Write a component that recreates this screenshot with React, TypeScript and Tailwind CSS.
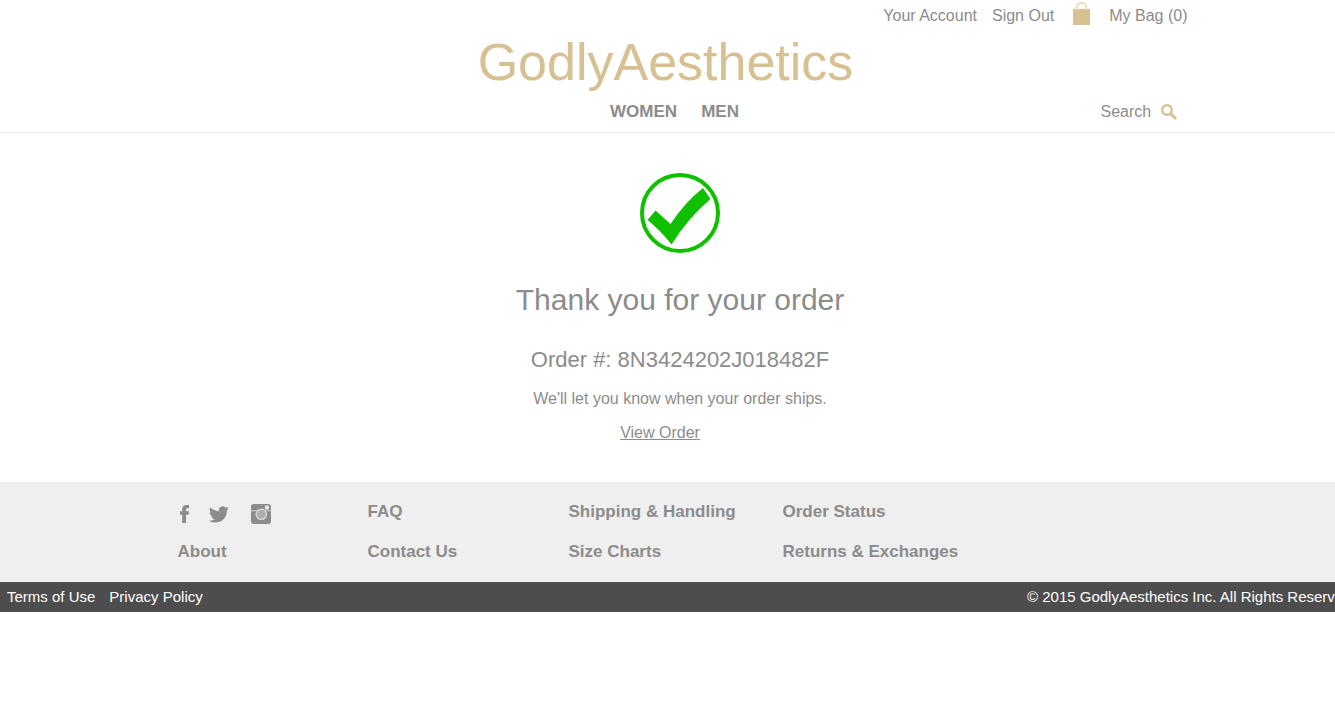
import type { ReactNode } from "react";

function BagIcon() {
  return (
    <svg width="18" height="28" viewBox="0 0 18 28" aria-hidden="true">
      <rect y="7" width="17" height="16" fill="#d7c192" />
      <path d="M3.5 8.5V6a5 5.3 0 0 1 10 0v2.5" fill="none" stroke="#e4d6b4" strokeWidth="1.5" />
    </svg>
  );
}

function SearchIcon() {
  return (
    <svg width="16" height="16" viewBox="0 0 16 16" fill="none" stroke="#d7c192" aria-hidden="true">
      <circle cx="6" cy="6" r="4.8" strokeWidth="2.4" />
      <path d="M9.6 9.6l5.4 5.2" strokeWidth="3" />
    </svg>
  );
}

function CheckMark() {
  return (
    <svg width="80" height="80" viewBox="0 0 80 80" aria-hidden="true">
      <circle cx="40" cy="40" r="38" fill="none" stroke="#10c000" strokeWidth="4" />
      <path d="M7.5 47L15.5 37.5L30.5 51Q45 29 63 15L70.5 26Q48 45 31.5 71.5Q20 57 7.5 47Z" fill="#10c000" />
    </svg>
  );
}

function FacebookIcon() {
  return (
    <svg width="9" height="18" viewBox="0 0 9 18" fill="#8c8c8c" aria-hidden="true">
      <path d="M2.2 18V9.8H0V6.2h2.2V4.3C2.2 1.5 3.8 0 6.3 0H9v3.3H7.3C6.3 3.3 6 3.7 6 4.6v1.6h3l-.3 3.6H6V18z" />
    </svg>
  );
}

function TwitterIcon() {
  return (
    <svg width="20" height="17" viewBox="0 0 24 20" fill="#8c8c8c" aria-hidden="true">
      <path d="M23.95 2.57a10 10 0 0 1-2.82.78 4.96 4.96 0 0 0 2.16-2.73 9.9 9.9 0 0 1-3.12 1.19 4.92 4.92 0 0 0-8.39 4.48A13.98 13.98 0 0 1 1.63 1.15a4.92 4.92 0 0 0 1.52 6.57 4.9 4.9 0 0 1-2.23-.61v.06a4.92 4.92 0 0 0 3.95 4.83 5 5 0 0 1-2.21.08 4.94 4.94 0 0 0 4.6 3.42A9.87 9.87 0 0 1 0 17.54a13.99 13.99 0 0 0 7.55 2.21c9.05 0 14-7.5 14-13.98 0-.21 0-.42-.02-.63a9.94 9.94 0 0 0 2.42-2.57z" />
    </svg>
  );
}

function InstagramIcon() {
  return (
    <svg width="20" height="20" viewBox="0 0 20 20" aria-hidden="true">
      <rect width="20" height="20" rx="3" fill="#8c8c8c" />
      <path d="M0 6.8h20" stroke="#c8c8c8" strokeWidth="1" />
      <circle cx="10.3" cy="10.3" r="5.2" fill="#adadad" stroke="#dedede" strokeWidth="1.2" />
      <rect x="14" y="1.5" width="4" height="4" rx=".6" fill="#e6e6e6" />
    </svg>
  );
}

function FooterLink({ children }: { children: ReactNode }) {
  return (
    <a href="#" className="block whitespace-nowrap hover:underline">
      {children}
    </a>
  );
}

export default function App() {
  return (
    <div className="overflow-x-hidden bg-white font-['Liberation_Sans',Arial,sans-serif] text-base text-[#8c8c8c]">
      <header className="border-b border-[#e7e7e7]">
        <div className="mx-auto max-w-[1040px]">
          <div className="flex h-8 items-center justify-end">
            <a href="#">Your Account</a>
            <a href="#" className="ml-[15px]">Sign Out</a>
            <a href="#" className="ml-[19px] flex items-center gap-[18px]">
              <BagIcon />
              <span>My Bag (0)</span>
            </a>
          </div>
          <h1 className="pr-1 text-center text-[52px] leading-[60px] text-[#d7c192]">
            <a href="#">GodlyAesthetics</a>
          </h1>
          <div className="grid h-10 grid-cols-[1fr_auto_1fr] items-center pl-[14px]">
            <nav className="col-start-2 flex gap-6 text-[17px] font-bold">
              <a href="#">WOMEN</a>
              <a href="#">MEN</a>
            </nav>
            <form className="mr-[11px] flex items-center gap-2 justify-self-end">
              <input
                type="text"
                aria-label="Search"
                placeholder="Search"
                className="w-[52px] bg-transparent outline-none placeholder:text-[#8c8c8c]"
              />
              <button type="button" aria-label="Submit search">
                <SearchIcon />
              </button>
            </form>
          </div>
        </div>
      </header>

      <main className="flex flex-col items-center pt-10 pb-[38px] pl-[25px] text-center">
        <CheckMark />
        <h2 className="mt-7 text-[30px] leading-[38px]">Thank you for your order</h2>
        <h3 className="mt-[25px] text-[22px] leading-8">Order #: 8N3424202J018482F</h3>
        <p className="mt-3 leading-[22px]">We&apos;ll let you know when your order ships.</p>
        <a href="#" className="mt-3 mr-10 leading-[22px] underline">View Order</a>
      </main>

      <footer>
        <div className="bg-[#efefef]">
          <div className="mx-auto grid h-[100px] max-w-[1040px] grid-cols-[190px_201px_214px_auto] content-center gap-y-4 pl-[30px] text-[17px] leading-6 font-bold">
            <div className="flex items-end">
              <a href="#" aria-label="Facebook" className="flex h-5 items-center pl-0.5">
                <FacebookIcon />
              </a>
              <a href="#" aria-label="Twitter" className="ml-5 flex h-5 items-center">
                <TwitterIcon />
              </a>
              <a href="#" aria-label="Instagram" className="ml-[22px] flex h-5 items-center">
                <InstagramIcon />
              </a>
            </div>
            <FooterLink>FAQ</FooterLink>
            <FooterLink>Shipping &amp; Handling</FooterLink>
            <FooterLink>Order Status</FooterLink>
            <FooterLink>About</FooterLink>
            <FooterLink>Contact Us</FooterLink>
            <FooterLink>Size Charts</FooterLink>
            <FooterLink>Returns &amp; Exchanges</FooterLink>
          </div>
        </div>
        <div className="flex h-[30px] items-center justify-between overflow-hidden bg-[#4d4d4d] pl-[7px] text-[15px] text-white">
          <div className="flex gap-[14px]">
            <a href="#">Terms of Use</a>
            <a href="#">Privacy Policy</a>
          </div>
          <p className="w-[308px] shrink-0 whitespace-nowrap">© 2015 GodlyAesthetics Inc. All Rights Reserved.</p>
        </div>
      </footer>
    </div>
  );
}
